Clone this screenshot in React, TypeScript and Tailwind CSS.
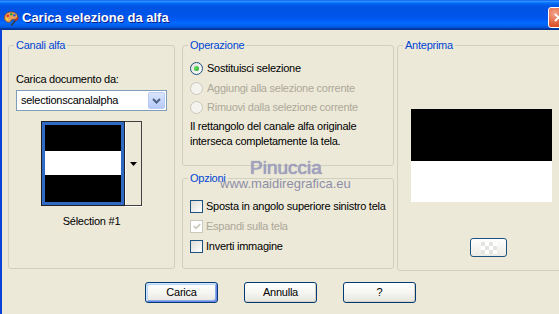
import React from "react";

const ui = "font-['Liberation_Sans',Arial,sans-serif] text-[11px] leading-[13px] tracking-[-0.25px] text-black";

function Radio({ checked, disabled }: { checked?: boolean; disabled?: boolean }) {
  return (
    <span
      className={`flex h-[13px] w-[13px] shrink-0 items-center justify-center rounded-full border ${
        disabled ? "border-[#cac8bb] bg-[#f4f3ee]" : "border-[#1c5180] bg-[linear-gradient(135deg,#dcdcd7,#ffffff)]"
      }`}
    >
      {checked && <span className="h-[5px] w-[5px] rounded-full bg-[radial-gradient(circle_at_35%_35%,#62e062,#21a121)]" />}
    </span>
  );
}

function Check({ checked, disabled }: { checked?: boolean; disabled?: boolean }) {
  return (
    <span
      className={`flex h-[13px] w-[13px] shrink-0 items-center justify-center border ${
        disabled ? "border-[#cac8bb] bg-white" : "border-[#1c5180] bg-[linear-gradient(135deg,#dcdcd7,#ffffff)]"
      }`}
    >
      {checked && (
        <svg width="8" height="7" viewBox="0 0 8 7">
          <path d="M0.8 3.2 L3 5.4 L7.2 1.2" stroke={disabled ? "#cac8bb" : "#21a121"} strokeWidth="1.7" fill="none" />
        </svg>
      )}
    </span>
  );
}

function Group({ title, className, children }: { title: string; className?: string; children?: React.ReactNode }) {
  return (
    <fieldset className={`rounded-[3px] border border-[#d0d0bf] px-[7px] ${className ?? ""}`}>
      <legend className="-ml-[2px] px-[2px] text-[#0046d5]">{title}</legend>
      {children}
    </fieldset>
  );
}

function Btn({ children, def }: { children: React.ReactNode; def?: boolean }) {
  return (
    <button
      className={`flex h-[21px] w-[73px] items-center justify-center rounded-[3px] border border-[#003c74] bg-[linear-gradient(180deg,#ffffff,#f4f4f0_55%,#e6e5de)] ${
        def
          ? "shadow-[inset_1px_1px_0_#cee7ff,inset_-1px_-1px_0_#6982ee,inset_2px_2px_0_#bcd4f6,inset_-2px_-2px_0_#89ade4]"
          : "shadow-[inset_-1px_-1px_0_#d6d0c5]"
      }`}
    >
      {children}
    </button>
  );
}

function PaletteIcon() {
  return (
    <svg width="16" height="16" viewBox="0 0 16 16" className="shrink-0">
      <path
        d="M8 2 C3.5 2 1 5 1.5 8.5 C2 11.5 5 13 7 12 C8.5 11.3 7.5 10 9 9.5 C11 9 14.5 10 14.5 6.5 C14.5 3.5 11.5 2 8 2Z"
        fill="#e9a15a"
        stroke="#8a4b1c"
        strokeWidth="0.8"
      />
      <circle cx="4.8" cy="5.8" r="1.3" fill="#e53324" />
      <circle cx="8.2" cy="4.3" r="1.2" fill="#2f9e32" />
      <circle cx="11.4" cy="5.3" r="1.2" fill="#2d55d8" />
      <circle cx="4.2" cy="9.2" r="1.2" fill="#f7d633" />
      <path d="M8.5 15 L13 10" stroke="#3b3b3b" strokeWidth="1.6" strokeLinecap="round" />
      <path d="M13 10 L14.6 8.2" stroke="#c23a1c" strokeWidth="2" strokeLinecap="round" />
    </svg>
  );
}

export default function App() {
  return (
    <div className="h-[314px] w-[559px] overflow-hidden bg-[#ece9d8]">
      <div className={`relative w-[573px] ${ui}`}>
        <div className="flex h-[30px] items-center bg-[linear-gradient(180deg,#0058EE_0%,#3593FF_4%,#288EFF_6%,#127DFF_8%,#036FFC_10%,#0262EE_14%,#0057E5_20%,#0054E3_24%,#0055EB_56%,#005BF5_66%,#026AFE_76%,#0062EF_86%,#0052D6_92%,#0040AB_94%,#003092_100%)] pl-[3px] pr-[4px] pt-[5px]">
          <PaletteIcon />
          <span className="ml-[3px] text-[13px] font-bold leading-[16px] tracking-normal text-white [text-shadow:1px_1px_#0a1e8c]">
            Carica selezione da alfa
          </span>
          <span className="ml-auto flex h-[21px] w-[21px] shrink-0 items-center justify-center rounded-[3px] border border-white bg-[radial-gradient(circle_at_30%_30%,#f3a48c,#e0572f_60%,#c2350f)]">
            <svg width="9" height="9" viewBox="0 0 9 9">
              <path d="M1 1 L8 8 M8 1 L1 8" stroke="white" strokeWidth="1.8" />
            </svg>
          </span>
        </div>

        <div className="h-[284px] border-l-2 border-[#0842d8] pl-[6px] pt-[9px]">
          <div className="flex items-start">
            <Group title="Canali alfa" className="h-[230px] w-[167px]">
              <div className="mt-[21px]">Carica documento da:</div>
              <div className="mt-[4px] flex h-[21px] w-full items-center border border-[#7f9db9] bg-white pl-[4px] pr-[1px]">
                <span className="flex-1">selectionscanalalpha</span>
                <span className="flex h-[17px] w-[17px] items-center justify-center rounded-[2px] border border-[#bacbf5] bg-[linear-gradient(180deg,#dae5fd,#b6caf7)]">
                  <svg width="9" height="6" viewBox="0 0 9 6">
                    <path d="M1 1 L4.5 4.5 L8 1" stroke="#4d6185" strokeWidth="2" fill="none" />
                  </svg>
                </span>
              </div>
              <div className="mt-[10px] flex justify-center">
                <div className="flex">
                  <div className="h-[85px] w-[84px] border border-[#202020]">
                    <div className="flex h-full flex-col border-[3px] border-[#316ac5]">
                      <div className="h-[26px] bg-black" />
                      <div className="h-[24px] bg-white" />
                      <div className="flex-1 bg-black" />
                    </div>
                  </div>
                  <div className="flex h-[85px] w-[17px] items-center justify-center border-y border-r border-[#404040] shadow-[inset_1px_0_0_#ffffff,0_1px_0_#ffffff]">
                    <svg width="7" height="4" viewBox="0 0 7 4">
                      <polygon points="0,0 7,0 3.5,4" fill="#000" />
                    </svg>
                  </div>
                </div>
              </div>
              <div className="mt-[9px] text-center">Sélection #1</div>
            </Group>

            <div className="ml-[7px] flex w-[212px] flex-col gap-[6px]">
              <Group title="Operazione" className="h-[127px]">
                <div className="mt-[6px] flex flex-col">
                  <div className="flex h-[20px] items-center gap-[4px]">
                    <Radio checked />
                    <span>Sostituisci selezione</span>
                  </div>
                  <div className="flex h-[20px] items-center gap-[4px] text-[#aca899]">
                    <Radio disabled />
                    <span>Aggiungi alla selezione corrente</span>
                  </div>
                  <div className="flex h-[19px] items-center gap-[4px] text-[#aca899]">
                    <Radio disabled />
                    <span>Rimuovi dalla selezione corrente</span>
                  </div>
                </div>
                <p className="mt-[2px] leading-[15px]">
                  Il rettangolo del canale alfa originale
                  <br />
                  interseca completamente la tela.
                </p>
              </Group>
              <Group title="Opzioni" className="h-[97px]">
                <div className="mt-[11px] flex flex-col">
                  <div className="flex h-[20px] items-center gap-[3px]">
                    <Check />
                    <span>Sposta in angolo superiore sinistro tela</span>
                  </div>
                  <div className="flex h-[20px] items-center gap-[3px] text-[#aca899]">
                    <Check checked disabled />
                    <span>Espandi sulla tela</span>
                  </div>
                  <div className="flex h-[20px] items-center gap-[3px]">
                    <Check />
                    <span>Inverti immagine</span>
                  </div>
                </div>
              </Group>
            </div>

            <Group title="Anteprima" className="ml-[3px] h-[232px] w-[169px]">
              <div className="ml-[6px] mt-[57px] flex h-[93px] w-[141px] flex-col">
                <div className="h-[52px] bg-black" />
                <div className="flex-1 bg-white" />
              </div>
              <button className="ml-[65px] mt-[36px] flex h-[19px] w-[37px] items-center justify-center rounded-[3px] border border-[#1c5180] bg-[linear-gradient(180deg,#ffffff,#ecebe4)]">
                <span className="h-[12px] w-[16px] bg-[conic-gradient(#ffffff_25%,#e4e4e0_0_50%,#ffffff_0_75%,#e4e4e0_0)] bg-[length:8px_8px]" />
              </button>
            </Group>
          </div>

          <div className="ml-[137px] mt-[11px] flex gap-[26px]">
            <Btn def>Carica</Btn>
            <Btn>Annulla</Btn>
            <Btn>?</Btn>
          </div>
        </div>

        <div className="pointer-events-none absolute left-[220px] top-[157px] flex flex-col tracking-normal">
          <span className="ml-[30px] text-[19px] leading-[22px] text-[#a3a3c2] [text-shadow:0_0_1px_#6f6f99]">Pinuccia</span>
          <span className="-mt-[3px] text-[13px] leading-[15px] text-[#8e8ea8]">www.maidiregrafica.eu</span>
        </div>
      </div>
    </div>
  );
}
